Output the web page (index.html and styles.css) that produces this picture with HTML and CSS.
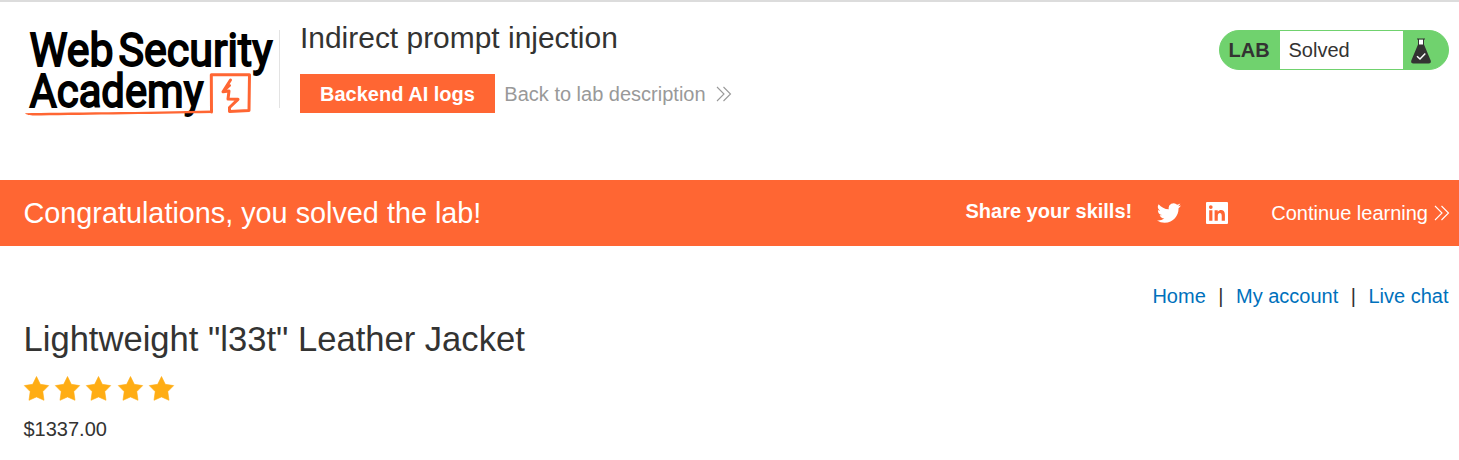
FILE: index.html
```html
<!DOCTYPE html>
<html lang="en">
<head>
<meta charset="utf-8">
<title>Indirect prompt injection</title>
<link rel="stylesheet" href="styles.css">
</head>
<body>
<header class="lab-header">
  <svg class="logo" width="257" height="120" viewBox="20 2 257 120" role="img" aria-label="Web Security Academy">
    <g class="logo-text">
      <text x="29.500" y="65.500" textLength="84" lengthAdjust="spacingAndGlyphs">Web</text>
      <text x="118.500" y="65.500" textLength="154" lengthAdjust="spacingAndGlyphs">Security</text>
      <text x="29.500" y="106.500" textLength="174" lengthAdjust="spacingAndGlyphs">Academy</text>
    </g>
    <path class="logo-line" d="M211.500 112L211.300 74.800L249.500 74.800L249 110.500L229.500 111.500L229.500 107.500L238 99.300L228 99L229 91L223 91.800L230.500 80M224 90.500L229.500 85.500"/>
    <path class="logo-underline" d="M25 113.200C60 112.400 150 112.200 212 110.500L212 113C150 114 70 115 34 115.500C30 115.500 26 114.500 25 113.200Z"/>
  </svg>
  <div class="title">
    <h2>Indirect prompt injection</h2>
    <div class="actions">
      <a class="button">Backend AI logs</a>
      <a class="back">Back to lab description
        <svg class="chevrons" width="16" height="16" viewBox="0 0 16 16"><path d="M1 1L8 8L1 15M7.500 1L14.500 8L7.500 15"/></svg>
      </a>
    </div>
  </div>
  <div class="status">
    <span class="status-tag">LAB</span>
    <span class="status-text">Solved</span>
    <span class="status-icon">
      <svg width="22" height="26" viewBox="0 0 22 26">
        <path fill="#fff" d="M9 1.500h4v6H9z"/>
        <path fill="#333332" d="M7 .5h8v1H7zM8 1.500h1v5H8zM13 1.500h1v5h-1zM8 6.500h6L20.700 22.500Q21.500 25.500 18.500 25.500H3.500Q.5 25.500 1.300 22.500Z"/>
        <path fill="none" stroke="#fff" stroke-width="1.500" d="M7 18.200L10 21L15.300 15.500"/>
      </svg>
    </span>
  </div>
</header>
<section class="banner">
  <h4>Congratulations, you solved the lab!</h4>
  <span class="share">Share your skills!</span>
  <svg class="twitter" width="24" height="24" viewBox="0 0 24 24"><path d="M23.950 4.570a10 10 0 0 1-2.820.770 4.960 4.960 0 0 0 2.160-2.720c-.950.550-2 .950-3.130 1.180a4.920 4.920 0 0 0-8.380 4.480C7.690 8.090 4.070 6.130 1.640 3.160a4.920 4.920 0 0 0 1.520 6.570 4.900 4.900 0 0 1-2.230-.610v.060a4.920 4.920 0 0 0 3.950 4.830 5 5 0 0 1-2.210.080 4.940 4.940 0 0 0 4.600 3.420A9.870 9.870 0 0 1 0 19.540a13.990 13.990 0 0 0 7.550 2.210c9.050 0 14-7.500 14-13.980 0-.210 0-.420-.020-.630a9.940 9.940 0 0 0 2.420-2.570z"/></svg>
  <svg class="linkedin" width="22" height="22" viewBox="0 0 22 22"><path fill-rule="evenodd" d="M1 0h20q1 0 1 1v20q0 1-1 1H1q-1 0-1-1V1q0-1 1-1zM3.200 8.300v10.500h3.200V8.300zM4.800 3.200a1.800 1.800 0 1 0 0 3.700 1.800 1.800 0 1 0 0-3.700zM8.600 8.300v10.500h3.200v-5.200c0-3.200 3.900-3.500 3.900 0v5.200h3.200v-6.300c0-5.200-5.200-5.400-7.200-2.700V8.300z"/></svg>
  <a class="continue">Continue learning
    <svg class="chevrons" width="16" height="16" viewBox="0 0 16 16"><path d="M1 1L8 8L1 15M7.500 1L14.500 8L7.500 15"/></svg>
  </a>
</section>
<nav class="links"><a>Home</a><span>|</span><a>My account</a><span>|</span><a>Live chat</a></nav>
<main class="product">
  <h3>Lightweight "l33t" Leather Jacket</h3>
  <div class="stars">
    <svg viewBox="0 0 25 25"><path d="M12.500.500L16.300 8.300L24.700 9.600L18.800 15.600L20 24.300L12.500 20.900L5 24.300L6.200 15.600L.3 9.600L8.700 8.300Z"/></svg>
    <svg viewBox="0 0 25 25"><path d="M12.500.500L16.300 8.300L24.700 9.600L18.800 15.600L20 24.300L12.500 20.900L5 24.300L6.200 15.600L.3 9.600L8.700 8.300Z"/></svg>
    <svg viewBox="0 0 25 25"><path d="M12.500.500L16.300 8.300L24.700 9.600L18.800 15.600L20 24.300L12.500 20.900L5 24.300L6.200 15.600L.3 9.600L8.700 8.300Z"/></svg>
    <svg viewBox="0 0 25 25"><path d="M12.500.500L16.300 8.300L24.700 9.600L18.800 15.600L20 24.300L12.500 20.900L5 24.300L6.200 15.600L.3 9.600L8.700 8.300Z"/></svg>
    <svg viewBox="0 0 25 25"><path d="M12.500.500L16.300 8.300L24.700 9.600L18.800 15.600L20 24.300L12.500 20.900L5 24.300L6.200 15.600L.3 9.600L8.700 8.300Z"/></svg>
  </div>
  <div class="price">$1337.00</div>
</main>
</body>
</html>
```
FILE: styles.css
```css
* { box-sizing: border-box; }
body {
  margin: 0;
  height: 460px;
  overflow: hidden;
  background: #fff;
  color: #333332;
  font: 20px/24px "Liberation Sans", Arial, sans-serif;
}
h2, h3, h4 { margin: 0; font-weight: 400; }
svg { display: block; flex: none; }
.lab-header {
  display: flex;
  align-items: flex-start;
  height: 180px;
  padding: 0 10px 0 20px;
  border-top: 2px solid #dcdcdc;
}
.logo { overflow: visible; }
.logo-text {
  font: 400 46px Roboto, sans-serif;
  fill: #000;
  stroke: #000;
  stroke-width: 1.8px;
}
.logo-line { fill: none; stroke: #ff6633; stroke-width: 3px; stroke-linejoin: round; stroke-linecap: round; }
.logo-underline { fill: #ff6633; }
.title {
  height: 78px;
  margin: 28px 0 0 2px;
  padding-left: 20px;
  border-left: 1px solid #e3e3e3;
}
.title h2 { font-size: 29.95px; line-height: 34px; margin-top: -9px; }
.actions { display: flex; align-items: center; margin-top: 19px; }
.button {
  height: 39px;
  padding: 1px 20px 0;
  background: #ff6633;
  color: #fff;
  font-weight: 700;
  line-height: 39px;
}
.back { display: flex; align-items: center; gap: 10.5px; margin-left: 9.5px; color: #999; }
.chevrons { fill: none; stroke: currentColor; stroke-width: 1.1px; }
.status {
  display: flex;
  width: 230px;
  height: 40px;
  margin: 28px 0 0 auto;
  overflow: hidden;
  border: 1px solid #70d26e;
  border-radius: 20px;
  background: #70d26e;
  line-height: 38px;
}
.status-tag { width: 60px; padding-left: 8.5px; font-weight: 700; }
.status-text { width: 123px; padding-left: 8.5px; background: #fff; }
.status-icon { padding: 7px 0 0 7px; }
.banner {
  display: flex;
  align-items: center;
  height: 66px;
  padding: 0 9px 0 23.5px;
  background: #ff6633;
  color: #fff;
}
.banner h4 { font-size: 28.8px; }
.share { margin: 0 25px 4px auto; font-weight: 700; }
.twitter, .linkedin { fill: #fff; }
.linkedin { margin-left: 25px; }
.continue { display: flex; align-items: center; gap: 6px; margin-left: 43px; }
.links {
  display: flex;
  justify-content: flex-end;
  gap: 12.5px;
  padding: 38px 10.5px 0 0;
  color: #333332;
}
.links a { color: #0071bc; }
.product { padding: 9px 24px 0 23.5px; }
.product h3 { font-size: 34.6px; line-height: 44px; }
.stars { display: flex; gap: 6.2px; margin: 15px 0 0 .5px; }
.stars svg { width: 25px; height: 25px; overflow: visible; fill: #ffad14; stroke: #ffad14; stroke-width: .6px; }
.price { margin-top: 16px; }
```
